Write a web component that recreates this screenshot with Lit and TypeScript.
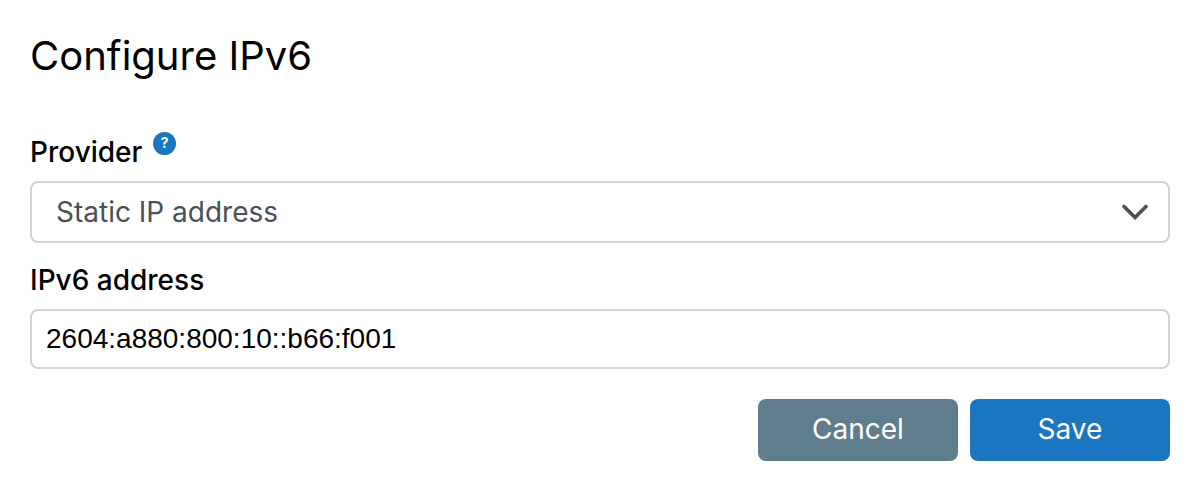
import { LitElement, html, css } from "lit";
import { customElement } from "lit/decorators.js";

@customElement("app-root")
export class AppRoot extends LitElement {
  static styles = css`
    :host {
      display: block;
      width: 1200px;
      height: 490px;
      box-sizing: border-box;
      padding: 30px 30px 0;
      background: #fff;
      color: #000;
      font-family: Inter, "Liberation Sans", sans-serif;
    }
    h1 {
      margin: 0 0 50px;
      font-size: 40px;
      line-height: 52px;
      font-weight: 400;
    }
    .label {
      display: flex;
      align-items: flex-start;
      gap: 11px;
      font-size: 28px;
      line-height: 40px;
      font-weight: 500;
      height: 40px;
      margin-bottom: 9px;
    }
    .help {
      width: 23px;
      height: 23px;
    }
    .field {
      box-sizing: border-box;
      width: 1140px;
      border: 2px solid #ced4da;
      border-radius: 8px;
      display: flex;
      align-items: center;
      justify-content: space-between;
      font-size: 28px;
    }
    .select {
      height: 62px;
      padding: 0 20px 0 24px;
      color: #495057;
      margin-bottom: 17px;
    }
    .input {
      height: 60px;
      padding: 0 14px;
      color: #000;
      font-family: "Liberation Sans", sans-serif;
      margin-bottom: 30px;
    }
    .actions {
      display: flex;
      justify-content: flex-end;
      gap: 12px;
      width: 1140px;
    }
    .btn {
      height: 62px;
      padding-bottom: 2px;
      box-sizing: border-box;
      border-radius: 8px;
      display: flex;
      align-items: center;
      justify-content: center;
      color: #fff;
      font-size: 28px;
    }
    .cancel { width: 200px; background: #607d8b; }
    .save { width: 200px; background: #1a76c0; }
  `;

  render() {
    return html`
      <h1>Configure IPv6</h1>
      <div class="label">
        <span>Provider</span>
        <svg class="help" viewBox="0 0 24 24">
          <circle cx="12" cy="12" r="12" fill="#1a76c0"></circle>
          <text x="12" y="17" text-anchor="middle" font-size="15" font-weight="700" fill="#fff" font-family="Inter, sans-serif">?</text>
        </svg>
      </div>
      <div class="field select">
        <span>Static IP address</span>
        <svg width="26" height="16" viewBox="0 0 26 16"><path d="M2 2.5 13 13.5 24 2.5" fill="none" stroke="#495057" stroke-width="3.6" stroke-linecap="round"></path></svg>
      </div>
      <div class="label">IPv6 address</div>
      <div class="field input">2604:a880:800:10::b66:f001</div>
      <div class="actions">
        <div class="btn cancel">Cancel</div>
        <div class="btn save">Save</div>
      </div>
    `;
  }
}
